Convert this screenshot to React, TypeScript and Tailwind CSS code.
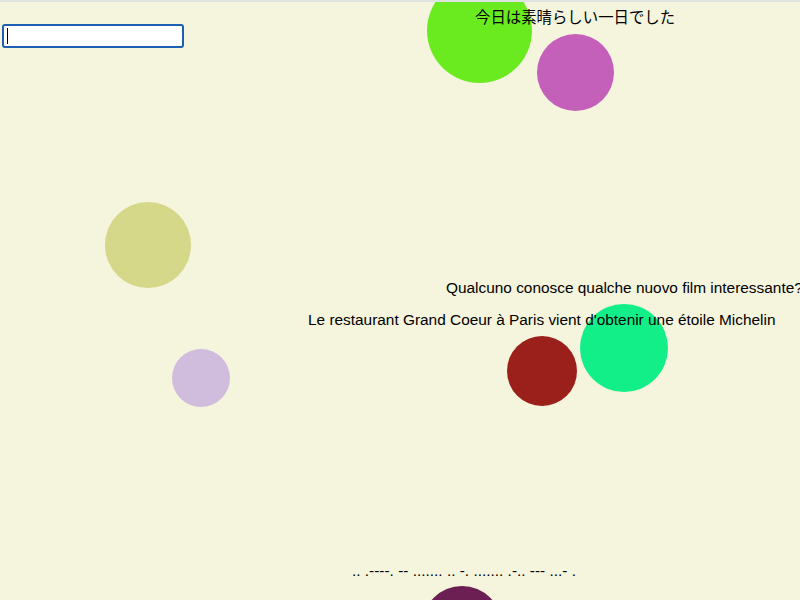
import { useEffect, useRef } from 'react'

type Bubble = { x: number; y: number; d: number; color: string }

// circle centres and diameters, read off the canvas
const BUBBLES: Bubble[] = [
  { x: 479, y: 30, d: 105, color: '#6aeb1f' },
  { x: 575, y: 72, d: 77, color: '#c45fba' },
  { x: 148, y: 245, d: 86, color: '#d5d889' },
  { x: 201, y: 378, d: 58, color: '#d0bcdc' },
  { x: 542, y: 371, d: 70, color: '#9b1f1a' },
  { x: 624, y: 348, d: 88, color: '#13ef88' },
  { x: 462, y: 626, d: 80, color: '#6b1f52' },
]

const MESSAGES = [
  { x: 475, y: 9, text: '今日は素晴らしい一日でした' },
  { x: 446, y: 279, text: 'Qualcuno conosce qualche nuovo film interessante?' },
  { x: 308, y: 311, text: "Le restaurant Grand Coeur à Paris vient d'obtenir une étoile Michelin" },
  { x: 352, y: 562, text: '.. .----. -- ....... .. -. ....... .-.. --- ...- .' },
]

const App = () => {
  const inputRef = useRef<HTMLInputElement>(null)

  useEffect(() => {
    inputRef.current?.focus()
  }, [])

  return (
    <div className="relative w-[800px] h-[600px] overflow-hidden bg-[#f5f4dd] font-['Liberation_Sans','Noto_Sans_CJK_JP',sans-serif]">
      {/* bubbles */}
      {BUBBLES.map((b, i) => (
        <div
          key={i}
          className="absolute rounded-full"
          style={{
            left: b.x - b.d / 2,
            top: b.y - b.d / 2,
            width: b.d,
            height: b.d,
            backgroundColor: b.color,
          }}
        />
      ))}

      {/* floating messages */}
      {MESSAGES.map((m, i) => (
        <p
          key={i}
          className="absolute whitespace-nowrap text-[15.4px] leading-[18px] text-black"
          style={{ left: m.x, top: m.y }}
        >
          {m.text}
        </p>
      ))}

      <div className="relative pt-[24px] pl-[2px]">
        <div className="relative w-[182px]">
          <input
            ref={inputRef}
            type="text"
            className="block w-[182px] h-[24px] rounded-[3px] border-2 border-[#1d5fb5] bg-white px-[3px] text-[14px] text-black caret-transparent outline-none"
          />
          {/* caret drawn so it shows in a still frame */}
          <span className="pointer-events-none absolute left-[5px] top-[4px] h-[16px] w-px bg-black" />
        </div>
      </div>

      <div className="absolute inset-x-0 top-0 h-[2px] bg-[#dde3df]" />
    </div>
  )
}

export default App
